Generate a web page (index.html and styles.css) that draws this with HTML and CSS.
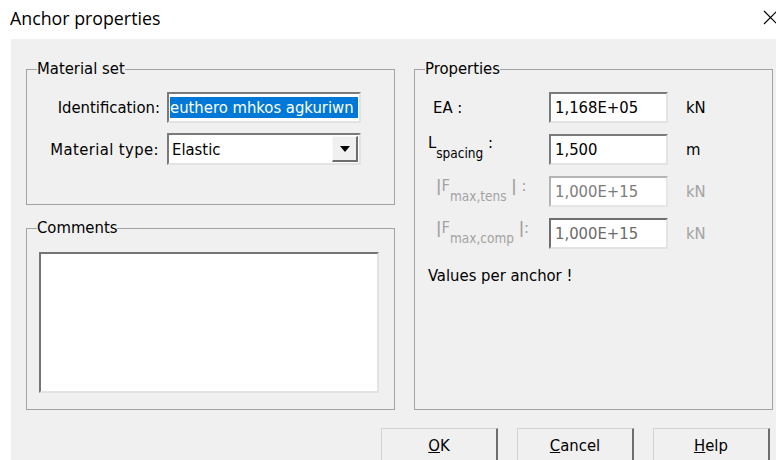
FILE: index.html
```html
<!DOCTYPE html>
<html lang="en">
<head>
<meta charset="utf-8">
<title>Anchor properties</title>
<link rel="stylesheet" href="styles.css">
</head>
<body>
<div class="titlebar">
  <span class="title">Anchor properties</span>
  <svg class="close" width="15" height="15" viewBox="0 0 15 15" aria-label="Close">
    <path d="M1 1L14 14M14 1L1 14" stroke="#000" stroke-width="1.2" fill="none"/>
  </svg>
</div>

<div class="client">
  <div class="panes">
    <div class="col-left">
      <fieldset class="group">
        <legend>Material set</legend>
        <div class="form-grid">
          <span class="flabel">Identification:</span>
          <div class="edit edit-sel"><span class="sel">euthero mhkos agkuriwn</span></div>
          <span class="flabel flabel-wide">Material type:</span>
          <div class="combo">
            <span class="combo-text">Elastic</span>
            <span class="drop">
              <svg width="10" height="6" viewBox="0 0 10 6"><path d="M0 0H10L5 6Z" fill="#000"/></svg>
            </span>
          </div>
        </div>
      </fieldset>

      <fieldset class="group group-fill">
        <legend>Comments</legend>
        <div class="memo"></div>
      </fieldset>
    </div>

    <fieldset class="group">
      <legend>Properties</legend>
      <div class="prop-grid">
        <span class="plabel plabel-ea">EA :</span>
        <div class="edit">1,168E+05</div>
        <span class="unit">kN</span>

        <span class="plabel">L<sub>spacing</sub> :</span>
        <div class="edit">1,500</div>
        <span class="unit">m</span>

        <span class="plabel plabel-f is-disabled"><span class="bar">|</span>F<sub>max,tens</sub> <span class="bar">|</span> :</span>
        <div class="edit is-disabled">1,000E+15</div>
        <span class="unit is-disabled">kN</span>

        <span class="plabel plabel-f is-disabled"><span class="bar">|</span>F<sub>max,comp</sub> <span class="bar">|</span>:</span>
        <div class="edit is-readonly">1,000E+15</div>
        <span class="unit is-disabled">kN</span>
      </div>
      <p class="note">Values per anchor !</p>
    </fieldset>
  </div>

  <div class="buttons">
    <button class="btn" type="button"><u>O</u>K</button>
    <button class="btn" type="button"><u>C</u>ancel</button>
    <button class="btn" type="button"><u>H</u>elp</button>
  </div>
</div>
</body>
</html>
```

FILE: styles.css
```css
* {
  box-sizing: border-box;
}

html,
body {
  margin: 0;
  width: 776px;
  height: 460px;
  overflow: hidden;
  background: #fff;
}

body {
  font-family: "DejaVu Sans Condensed", "DejaVu Sans", sans-serif;
  font-stretch: condensed;
  font-size: 16.5px;
  color: #000;
}

/* window caption */
.titlebar {
  height: 39px;
  display: flex;
  align-items: flex-start;
  padding-left: 10px;
}

.title {
  font-family: "Open Sans", sans-serif;
  font-stretch: normal;
  font-size: 17.8px;
  line-height: 20px;
  margin-top: 8px;
}

.close {
  margin-left: auto;
  margin-right: -2px;
  margin-top: 10px;
}

/* dialog client area */
.client {
  margin-left: 11px;
  height: 421px;
  background: #f0f0f0;
  padding: 21px 3px 0 15px;
}

.panes {
  display: grid;
  grid-template-columns: 369px 359px;
  column-gap: 19px;
  height: 350px;
}

.col-left {
  display: flex;
  flex-direction: column;
  gap: 14px;
}

/* group boxes */
.group {
  margin: 0;
  padding: 0;
  min-width: 0;
  border: 1px solid #a3a3a3;
}

.group legend {
  padding: 0;
  margin-left: 10px;
  font-size: 16.5px;
  line-height: 18px;
}

.group-fill {
  flex: 1;
  display: flex;
  flex-direction: column;
}

/* material set form */
.form-grid {
  display: grid;
  grid-template-columns: 1fr 194px;
  column-gap: 7px;
  row-gap: 10px;
  padding: 14px 33px 39px 12px;
}

.flabel {
  justify-self: end;
  align-self: center;
}

.flabel-wide {
  letter-spacing: 0.4px;
  margin-right: 1px;
}

.edit {
  height: 31px;
  display: flex;
  align-items: center;
  padding: 0 4px;
  background: #fff;
  border: 2px solid;
  border-color: #7a7a7a #e3e3e3 #e3e3e3 #7a7a7a;
  white-space: nowrap;
  overflow: hidden;
}

.edit-sel {
  padding: 0 1px;
}

.sel {
  flex: 1;
  height: 21px;
  display: flex;
  align-items: center;
  background: #0078d7;
  color: #fff;
  overflow: hidden;
  white-space: nowrap;
}

.combo {
  height: 32px;
  display: flex;
  align-items: center;
  padding-left: 3px;
  background: #fff;
  border: 2px solid;
  border-color: #7a7a7a #e3e3e3 #e3e3e3 #7a7a7a;
}

.drop {
  margin-left: auto;
  margin-right: 1px;
  width: 26px;
  height: 26px;
  display: flex;
  align-items: center;
  justify-content: center;
  background: #f0f0f0;
  border-style: solid;
  border-width: 1px 2px 2px 1px;
  border-color: #f8f8f8 #6e6e6e #6e6e6e #f8f8f8;
}

/* comments memo */
.memo {
  flex: 1;
  margin: 15px 15px 16px 12px;
  background: #fff;
  border: 2px solid;
  border-color: #747474 #e3e3e3 #e3e3e3 #747474;
}

/* properties */
.prop-grid {
  display: grid;
  grid-template-columns: 121px 119px auto;
  grid-auto-rows: 31px;
  row-gap: 11px;
  padding: 14px 0 0 13px;
}

.plabel {
  align-self: center;
  white-space: nowrap;
  line-height: 18px;
  margin-top: -12px;
}

.plabel sub {
  font-size: 13.5px;
  vertical-align: -10px;
  line-height: 0;
}

.plabel-ea {
  margin-top: 0;
  padding-left: 5px;
}

.plabel-f {
  margin-top: -10px;
  padding-left: 8px;
}

.bar {
  font-weight: bold;
}

.unit {
  align-self: center;
  padding-left: 18px;
}

.is-disabled {
  color: #a3a3a3;
}

.edit.is-disabled {
  color: #7c7c7c;
  border-color: #b4b4b4 #e6e6e6 #e6e6e6 #b4b4b4;
}

.edit.is-readonly {
  color: #6a6a6a;
  border-color: #6e6e6e #e3e3e3 #e3e3e3 #6e6e6e;
}

.note {
  margin: 18px 0 0 13px;
  line-height: 18px;
}

/* dialog buttons */
.buttons {
  display: flex;
  justify-content: flex-end;
  gap: 19px;
  margin-top: 18px;
  padding-right: 3px;
}

.btn {
  width: 117px;
  height: 34px;
  padding: 0;
  font: inherit;
  color: #000;
  background: #f0f0f0;
  border-style: solid;
  border-width: 1px 2px 0 1px;
  border-color: #d2d2d2 #6e6e6e #6e6e6e #d2d2d2;
}
```
